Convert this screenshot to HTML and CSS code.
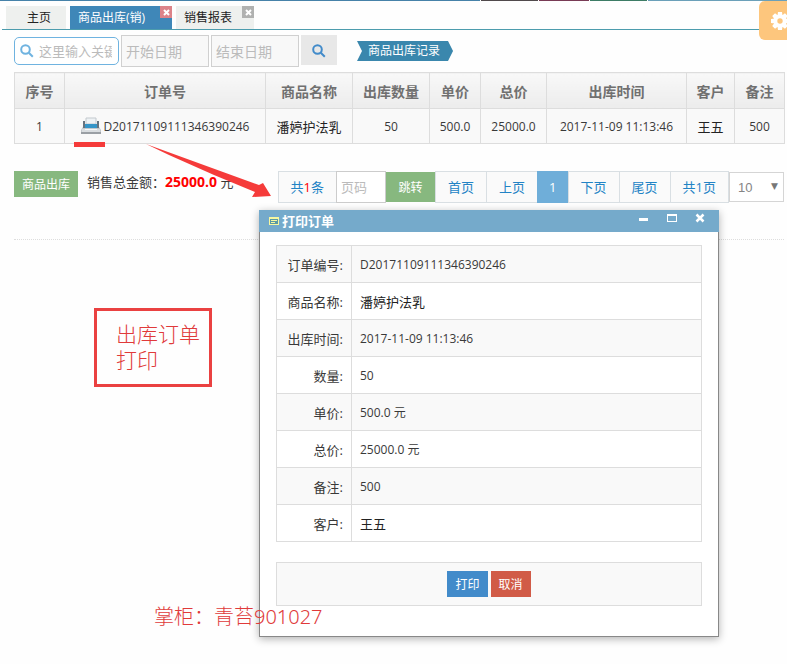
FILE: index.html
```html
<!DOCTYPE html>
<html lang="zh-CN">

<head>
    <meta charset="UTF-8">
    <title>商品出库</title>
    <link rel="stylesheet" href="styles.css">
</head>

<body>

    <div class="strip">
        <span class="blue"></span>
        <span class="dark"></span>
        <span class="wine"></span>
        <span class="green"></span>
        <span class="sky"></span>
    </div>

    <nav class="tabs">
        <a class="tab home" href="#">主页</a>
        <div class="tab active"><a href="#">商品出库(销)</a>
            <button class="close" aria-label="关闭"><svg viewBox="0 0 12 12"><path d="M4 4l5 5M9 4L4 9" /></svg></button>
        </div>
        <div class="tab"><a href="#">销售报表</a>
            <button class="close" aria-label="关闭"><svg viewBox="0 0 12 12"><path d="M4 4l5 5M9 4L4 9" /></svg></button>
        </div>
    </nav>

    <button class="settings" aria-label="设置">
        <svg viewBox="0 0 18 18">
            <g fill="#fff">
                <circle cx="9" cy="9" r="6.500" />
                <path id="tooth" d="M7 0h4l.6 4H6.400zM7 18h4l.6-4H6.400z" />
                <use href="#tooth" transform="rotate(45 9 9)" />
                <use href="#tooth" transform="rotate(90 9 9)" />
                <use href="#tooth" transform="rotate(135 9 9)" />
            </g>
            <circle cx="9" cy="9" r="2.700" fill="#fdc67d" />
        </svg>
    </button>

    <main>
        <form class="search">
            <label class="keyword">
                <svg viewBox="0 0 14 14"><circle cx="5.500" cy="5.500" r="4.300" /><path d="M8.800 8.800l4 4" /></svg>
                <input type="text" placeholder="这里输入关键词" aria-label="关键词">
            </label>
            <input class="date" type="text" placeholder="开始日期" aria-label="开始日期">
            <input class="date" type="text" placeholder="结束日期" aria-label="结束日期">
            <button class="find" type="button" aria-label="搜索">
                <svg viewBox="0 0 14 14"><circle cx="5.500" cy="5.500" r="4.300" /><path d="M8.800 8.800l4 4" /></svg>
            </button>
            <a class="ribbon" href="#">商品出库记录</a>
        </form>

        <table class="list">
            <colgroup>
                <col class="c-no"><col class="c-order"><col class="c-name"><col class="c-num"><col class="c-price"><col class="c-total"><col class="c-time"><col class="c-client"><col class="c-note">
            </colgroup>
            <thead>
                <tr>
                    <th>序号</th>
                    <th>订单号</th>
                    <th>商品名称</th>
                    <th>出库数量</th>
                    <th>单价</th>
                    <th>总价</th>
                    <th>出库时间</th>
                    <th>客户</th>
                    <th>备注</th>
                </tr>
            </thead>
            <tbody>
                <tr>
                    <td>1</td>
                    <td>
                        <div class="order">
                            <svg class="printer" viewBox="0 0 20 18">
                                <path d="M5 1h10v6H5z" fill="#eef2f5" stroke="#c3c9ce" />
                                <path d="M3 8h14l3 5v2H0v-2z" fill="#c3c8cc" />
                                <path d="M2 4h2v4h12V4h2v7H2z" fill="#66737f" />
                                <path d="M4 7h12v4H4z" fill="#3595c8" />
                                <path d="M1 12h18v3H1z" fill="#d9dde0" />
                                <path d="M4 12h12v1H4z" fill="#f4f6f7" />
                                <path d="M0 15h20v2H0z" fill="#9a9fa4" />
                            </svg>
                            <span>D20171109111346390246</span>
                        </div>
                    </td>
                    <td class="zh">潘婷护法乳</td>
                    <td>50</td>
                    <td>500.0</td>
                    <td>25000.0</td>
                    <td>2017-11-09 11:13:46</td>
                    <td class="zh">王五</td>
                    <td>500</td>
                </tr>
            </tbody>
        </table>

        <div class="bottom">
            <button class="btn out">商品出库</button>
            <p class="sum">销售总金额：<b>25000.0</b> 元</p>
            <div class="pages">
                <a href="#">共<i>1</i>条</a>
                <input type="text" placeholder="页码" aria-label="页码">
                <button class="jump">跳转</button>
                <a href="#">首页</a>
                <a href="#">上页</a>
                <a class="current" href="#">1</a>
                <a href="#">下页</a>
                <a href="#">尾页</a>
                <a class="count" href="#">共1页</a>
                <span class="size">
                    <select aria-label="每页条数">
                        <option>10</option>
                    </select>
                </span>
            </div>
        </div>
    </main>

    <section class="dialog" role="dialog" aria-label="打印订单">
        <header>
            <svg class="form-icon" viewBox="0 0 10 8"><path d="M0 0h10v8H0z" fill="#f7f7a0" /><path d="M1 2h8v5H1z" fill="#5b9aa5" /><path d="M2 3h6v1H2zM2 5h4v1H2z" fill="#f7f7a0" /></svg>
            <h2>打印订单</h2>
            <button aria-label="最小化"><svg viewBox="0 0 10 10"><path d="M0 5h9v3H0z" fill="#fff" /></svg></button>
            <button aria-label="最大化"><svg viewBox="0 0 10 10"><path d="M0 1h10v8H0zM1 3v5h8V3z" fill="#fff" fill-rule="evenodd" /></svg></button>
            <button aria-label="关闭"><svg viewBox="0 0 10 10"><path d="M1.500 1.500l7 7M8.500 1.500l-7 7" fill="none" stroke="#fff" stroke-width="2.500" /></svg></button>
        </header>
        <div class="content">
            <table class="detail">
                <tr><th>订单编号:</th><td>D20171109111346390246</td></tr>
                <tr><th>商品名称:</th><td class="zh">潘婷护法乳</td></tr>
                <tr><th>出库时间:</th><td>2017-11-09 11:13:46</td></tr>
                <tr><th>数量:</th><td>50</td></tr>
                <tr><th>单价:</th><td>500.0 元</td></tr>
                <tr><th>总价:</th><td>25000.0 元</td></tr>
                <tr><th>备注:</th><td>500</td></tr>
                <tr><th>客户:</th><td class="zh">王五</td></tr>
            </table>
            <div class="actions">
                <button class="btn print">打印</button>
                <button class="btn cancel">取消</button>
            </div>
        </div>
    </section>

    <!-- red notes on top of the page -->
    <svg class="arrow" viewBox="0 0 200 60">
        <path d="M0 0h31v5H0z" />
        <path d="M72 2L185 43L189 41L197 54L178 55L181 50L140 33L95 13z" />
    </svg>
    <p class="note">出库订单<br>打印</p>
    <p class="keeper">掌柜：青苔901027</p>

</body>

</html>
```
FILE: styles.css
```css
* {
    box-sizing: border-box;
}

body {
    margin: 0;
    min-height: 100vh;
    position: relative;
    background-color: #fefefe;
    color: #393939;
    font-family: "Open Sans", "Noto Sans CJK SC", sans-serif;
    font-size: 12px;
}

button, input, select {
    font-family: inherit;
    font-size: 12px;
    margin: 0;
    padding: 0;
    border: 0;
    border-radius: 0;
}

button {
    cursor: pointer;
}

a {
    text-decoration: none;
    color: inherit;
}

p, h2 {
    margin: 0;
}

table {
    border-collapse: collapse;
    width: 100%;
}

.zh {
    font-size: 13px;
    color: #222;
}

/* top strip */
.strip {
    display: flex;
    gap: 1px;
    height: 1px;
}

.strip .blue {
    flex: 481;
    background-color: #4682a9;
}

.strip .dark {
    flex: 57;
    background-color: #504a4c;
}

.strip .wine {
    flex: 50;
    background-color: #783b55;
}

.strip .green {
    flex: 57;
    background-color: #3d7c65;
}

.strip .sky {
    flex: 139;
    background-color: #6ba0b9;
}

/* tabs */
.tabs {
    display: flex;
    gap: 4px;
    margin-left: 2px;
    padding: 5px 0 0 4px;
    border-bottom: 1px solid #4c9cad;
}

.tab {
    position: relative;
    height: 23px;
    padding: 0 22px 0 8px;
    line-height: 24px;
    background-color: #eef0ee;
    color: #222;
}

.home {
    padding: 0 15px 0 21px;
}

.active {
    padding-right: 27px;
    background-color: #3f87b8;
    color: #fff;
}

.close {
    position: absolute;
    top: 0;
    right: 0;
    width: 12px;
    height: 12px;
    background-color: #b0b1b0;
}

.close svg {
    display: block;
    fill: none;
    stroke: #fff;
    stroke-width: 2;
}

.active .close {
    background-color: #dc8389;
}

.settings {
    position: absolute;
    top: 1px;
    right: 0;
    width: 28px;
    height: 39px;
    padding-left: 12px;
    overflow: hidden;
    border-radius: 6px 0 0 6px;
    background-color: #fdc67d;
}

.settings svg {
    display: block;
    width: 18px;
}

main {
    padding: 5px 3px 0 14px;
}

/* search */
.search {
    display: flex;
    gap: 2px;
    height: 37px;
}

.keyword {
    display: flex;
    align-items: center;
    gap: 5px;
    width: 105px;
    height: 28px;
    margin-top: 2px;
    padding: 0 6px 0 5px;
    border: 1px solid #6fb3e0;
    border-radius: 5px;
    background-color: #fff;
}

.search svg {
    flex: none;
    width: 14px;
    fill: none;
    stroke: #6fb3e0;
    stroke-width: 2;
}

.keyword input {
    width: 100%;
    min-width: 0;
    font-size: 13px;
    background: none;
}

::placeholder {
    color: #bbb;
}

.date {
    width: 88px;
    height: 32px;
    padding: 0 4px;
    border: 1px solid #d0d0d0;
    background-color: #f8f8f8;
    font-size: 14px;
}

.search .find {
    width: 36px;
    height: 30px;
    background-color: #e8e8e8;
}

.search .find svg {
    stroke: #428bca;
    vertical-align: middle;
}

.ribbon {
    height: 20px;
    margin: 6px 0 0 18px;
    padding: 0 13px 0 11px;
    line-height: 19px;
    color: #fff;
    background-color: #3a87ad;
    clip-path: polygon(0 0, 91px 0, 100% 50%, 91px 100%, 0 100%, 5px 50%);
}

/* list */
.list {
    table-layout: fixed;
}

.list th, .list td {
    height: 36px;
    padding: 0;
    text-align: center;
    border: 1px solid #ddd;
}

.list th {
    font-size: 14px;
    color: #707070;
    background-image: linear-gradient(#f8f8f8, #ececec);
}

.list td {
    height: 35px;
    background-color: #f9f9f9;
}

.c-no { width: 50px; }
.c-order { width: 201px; }
.c-name { width: 87px; }
.c-num { width: 77px; }
.c-price { width: 51px; }
.c-total { width: 66px; }
.c-time { width: 140px; }
.c-client { width: 48px; }
.c-note { width: 50px; }

.order {
    display: flex;
    justify-content: center;
    align-items: center;
    gap: 3px;
}

.printer {
    width: 20px;
    height: 18px;
}

/* buttons and pages */
.bottom {
    display: flex;
    height: 69px;
    margin-top: 27px;
    border-bottom: 1px dotted #ddd;
}

.btn {
    height: 26px;
    padding: 0 8px;
    color: #fff;
}

.out {
    background-color: #87b87f;
}

.sum {
    margin-left: 9px;
    font-size: 13px;
    line-height: 22px;
}

.sum b {
    font-size: 14px;
    color: #f00;
}

.pages {
    display: flex;
    height: 32px;
    margin-left: auto;
    font-size: 13px;
    line-height: 30px;
    color: #2283c5;
}

.pages a {
    padding: 0 12px;
    border: 1px solid #d9dfe3;
    border-right: 0;
    background-color: #fafafa;
}

.pages i {
    font-style: normal;
    color: #f00;
}

.pages input {
    width: 50px;
    padding: 0 4px;
    border: 1px solid #ccc;
    font-size: 13px;
}

.pages .jump {
    width: 49px;
    height: 30px;
    margin-top: 1px;
    color: #fff;
    background-color: #87b87f;
}

.pages .current {
    padding: 0 11px;
    border-color: #6faed9;
    background-color: #6faed9;
    color: #fff;
}

.pages .count {
    border-right: 1px solid #d9dfe3;
}

.size {
    position: relative;
}

.size::after {
    content: "▼";
    position: absolute;
    top: 0;
    right: 6px;
    font-family: "DejaVu Sans";
    font-size: 9px;
    color: #777;
    pointer-events: none;
}

.size select {
    display: block;
    appearance: none;
    width: 55px;
    height: 30px;
    margin-top: 1px;
    padding: 0 8px;
    border: 1px solid #d5d5d5;
    background-color: #fff;
    color: #858585;
    font-family: "Liberation Sans", sans-serif;
    font-size: 13px;
}

/* dialog */
.dialog {
    position: absolute;
    top: 210px;
    left: 259px;
    width: 460px;
    border: 1px solid #888;
    border-top: 0;
    background-color: #fff;
    box-shadow: 0 2px 8px rgba(0, 0, 0, 0.3);
}

.dialog header {
    display: flex;
    align-items: center;
    height: 22px;
    margin: 0 -1px;
    padding: 0 14px 0 10px;
    background-color: #75aacb;
}

.form-icon {
    width: 10px;
    margin-right: 3px;
}

.dialog h2 {
    flex: 1;
    font-size: 13px;
    line-height: 20px;
    color: #fff;
}

.dialog header button {
    width: 10px;
    height: 22px;
    padding-bottom: 6px;
    margin-left: 18px;
    background: none;
}

.dialog header button svg {
    display: block;
    width: 10px;
    height: 10px;
}

.content {
    padding: 13px 16px 30px;
}

.detail th, .detail td {
    height: 37px;
    padding: 0 8px;
    border: 1px solid #ddd;
    text-align: left;
}

.detail th {
    width: 75px;
    font-size: 13px;
    font-weight: normal;
    text-align: right;
    white-space: nowrap;
}

.detail tr:nth-child(odd) {
    background-color: #f9f9f9;
}

.actions {
    display: flex;
    justify-content: center;
    gap: 3px;
    margin-top: 20px;
    padding: 8px;
    border: 1px solid #ddd;
    background-color: #f9f9f9;
}

.print {
    background-color: #428bca;
}

.cancel {
    background-color: #d15b47;
}

/* notes */
.arrow {
    position: absolute;
    top: 142px;
    left: 74px;
    width: 200px;
    height: 60px;
    fill: #f53b3a;
    pointer-events: none;
}

.note {
    position: absolute;
    top: 308px;
    left: 94px;
    padding: 10px 9px 11px 19px;
    border: 3px solid #ea4141;
    font-size: 21px;
    font-weight: 300;
    line-height: 26px;
    color: #e03a3a;
}

.keeper {
    position: absolute;
    top: 604px;
    left: 154px;
    font-family: "Noto Sans", "Noto Sans CJK SC", sans-serif;
    font-size: 20px;
    font-weight: 300;
    line-height: 26px;
    color: #e03a3a;
}
```
